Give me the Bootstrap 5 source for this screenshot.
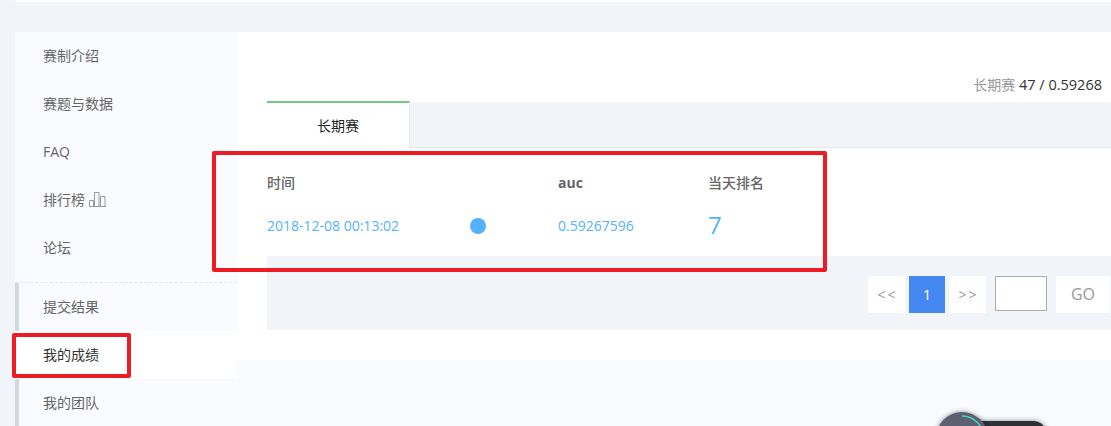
<!DOCTYPE html>
<html lang="zh">
<head>
<meta charset="utf-8">
<title>我的成绩</title>
<link href="https://cdn.jsdelivr.net/npm/bootstrap@5.3.0/dist/css/bootstrap.min.css" rel="stylesheet">
<style>
html,body{height:426px;overflow:hidden}
body{background:#f1f4f9;font-family:"Open Sans","Noto Sans CJK SC",sans-serif;font-size:14px;color:#666;position:relative}
.top-strip{height:2px;margin-left:15px;background:#fff;margin-bottom:30px}
.side-col{width:222px;margin-left:15px;flex:none;background:#f9fbfe;height:394px;overflow:hidden}
.side-group{padding-bottom:10px;border-bottom:1px dashed #e3e7ee}
.side-item{display:flex;align-items:center;gap:4px;height:48px;padding:0 0 2px 28px;color:#666;text-decoration:none;font-size:14px}
.side-marked .side-item{padding-left:24px;border-left:4px solid #d0d8e2}
.side-marked .side-item.now{background:#fff;color:#333;border-left-color:#fff}
.main-col{flex:1;min-width:0;background:#f9fbfe;height:394px}
.main-panel{height:328px;background:#fff;padding:0 0 0 30px}
.score-line{height:70px;padding:43px 9px 0 0;text-align:right;font-size:14.5px;line-height:20px;color:#333}
.score-line span{color:#999;font-size:14px}
.tab-rail{height:46px;background:#f1f4f9;border-bottom:1px solid #e4e7ea;display:flex}
.tab-on{width:143px;height:47px;background:#fff;border-top:2px solid #73c883;border-right:1px solid #e4e7ea;margin-top:-1px;flex:none;display:flex;align-items:center;justify-content:center;color:#222;font-size:14px}
.score-table{--bs-table-bg:transparent;margin:0;table-layout:fixed;width:844px}
.score-table th,.score-table td{border:0;vertical-align:middle;box-shadow:none}
.score-table th{height:56px;padding:12px 0 0;font-size:14px;font-weight:500;color:#666}
.score-table th b{font-weight:700}
.score-table td{height:52px;padding:0 0 8px;color:#55b1fb;font-size:14px}
.score-table td .cell-text{display:block;padding-bottom:2px}
.dot-mark{display:block;width:16px;height:16px;border-radius:50%;background:#55b1fb}
.rank-big{font-size:24px;line-height:24px}
.pager-bar{height:74px;background:#f1f4f9;padding:20px 1px 0 0;display:flex;justify-content:flex-end;align-items:flex-start}
.pager-bar .pagination{margin:0;gap:4px;--bs-pagination-border-width:0;--bs-pagination-border-radius:0}
.pager-bar .page-link{height:37px;width:37px;padding:0 0 0 2px;display:flex;align-items:center;justify-content:center;background:#fff;color:#999;border:0;border-radius:0!important;font-size:14px;letter-spacing:2px;margin:0!important}
.pager-bar .page-item.active .page-link{background:#4688f1;color:#fff;width:36px;padding:0;font-size:15px;letter-spacing:0}
.jump-box{width:52px;height:35px;border:1px solid #adadad;background:#fff;margin-left:9px;border-radius:0;padding:0}
.go-btn{width:54px;height:37px;margin-left:9px;background:#fff;color:#999;border:0;border-radius:0;padding:0 0 2px;font-size:16px}
.mark-box{position:absolute;border:4px solid #ed1c24;border-radius:2px;pointer-events:none}
.mark-a{left:212px;top:151px;width:615px;height:121px}
.mark-b{left:12px;top:333px;width:119px;height:45px}
.float-widget{position:absolute;left:925px;top:402px;display:block}
</style>
</head>
<body>
<div class="top-strip"></div>
<div class="d-flex">
  <nav class="side-col">
    <div class="side-group">
      <a class="side-item" href="#">赛制介绍</a>
      <a class="side-item" href="#">赛题与数据</a>
      <a class="side-item" href="#">FAQ</a>
      <a class="side-item" href="#">排行榜
        <svg width="17" height="15" viewBox="0 0 17 15" fill="none" stroke="#999" stroke-width="1"><path d="M0 14.500h17M.500 14.500v-6h4v6M5.500 14.500v-14h4.500v14M11.500 14.500v-10h4.500v10"/></svg>
      </a>
      <a class="side-item" href="#">论坛</a>
    </div>
    <div class="side-marked">
      <a class="side-item" href="#">提交结果</a>
      <a class="side-item now" href="#">我的成绩</a>
      <a class="side-item" href="#">我的团队</a>
    </div>
  </nav>
  <main class="main-col">
    <div class="main-panel">
      <div class="score-line"><span>长期赛</span> 47 / 0.59268</div>
      <div class="tab-rail"><div class="tab-on">长期赛</div></div>
      <table class="table score-table">
        <colgroup><col style="width:203px"><col style="width:88px"><col style="width:150px"><col></colgroup>
        <thead><tr><th>时间</th><th></th><th><b>auc</b></th><th>当天排名</th></tr></thead>
        <tbody><tr><td><span class="cell-text">2018-12-08 00:13:02</span></td><td><span class="dot-mark"></span></td><td><span class="cell-text">0.59267596</span></td><td><span class="rank-big">7</span></td></tr></tbody>
      </table>
      <div class="pager-bar">
        <ul class="pagination">
          <li class="page-item"><a class="page-link" href="#">&lt;&lt;</a></li>
          <li class="page-item active"><a class="page-link" href="#">1</a></li>
          <li class="page-item"><a class="page-link" href="#">&gt;&gt;</a></li>
        </ul>
        <input class="jump-box" type="text" aria-label="页码">
        <button class="btn go-btn" type="button">GO</button>
      </div>
    </div>
  </main>
</div>
<div class="mark-box mark-a"></div>
<div class="mark-box mark-b"></div>
<svg class="float-widget" width="130" height="24" viewBox="0 0 130 24">
  <defs><filter id="soft" x="-20%" y="-60%" width="140%" height="220%"><feDropShadow dx="0" dy="0" stdDeviation="2.500" flood-color="#000" flood-opacity=".45"/></filter></defs>
  <rect x="40" y="19" width="82" height="40" rx="14" fill="#2f3138" filter="url(#soft)"/>
  <circle cx="37" cy="36" r="26" fill="#5c6070" filter="url(#soft)"/>
  <path d="M37 14A22 22 0 0 1 57 27" fill="none" stroke="#45d6c4" stroke-width="1.500"/>
</svg>
</body>
</html>
